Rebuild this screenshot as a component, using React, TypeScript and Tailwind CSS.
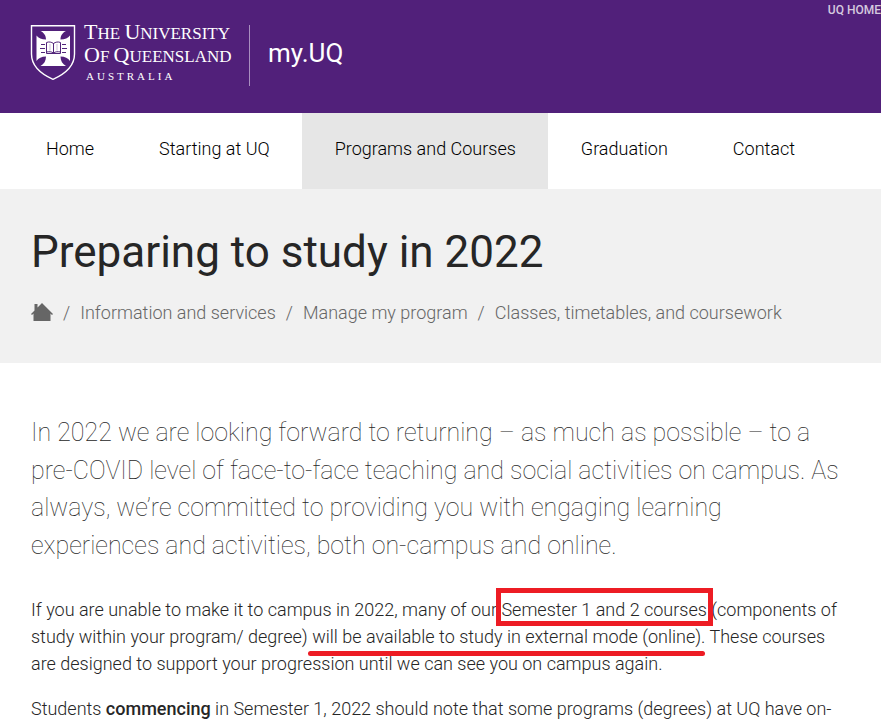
import { clsx } from "clsx";

const navItems = [
  { label: "Home", href: "#home" },
  { label: "Starting at UQ", href: "#starting" },
  { label: "Programs and Courses", href: "#programs", active: true },
  { label: "Graduation", href: "#graduation" },
  { label: "Contact", href: "#contact" },
];

const crumbs = ["Information and services", "Manage my program", "Classes, timetables, and coursework"];

function Crest() {
  return (
    <svg aria-hidden viewBox="0 0 46 56" className="h-14 w-[46px] shrink-0" fill="none">
      <path
        d="M1.5 .8H44.5V29C44.5 41 35 49 23 54.300C11 49 1.500 41 1.500 29Z"
        stroke="white"
        strokeWidth="1.400"
      />
      <path
        d="M10.500 6H36C33 7.500 30.500 10 30.500 14.500C35 14.500 38 13 40 10.500V36C38 33 35 31.500 30.500 31.500C30.500 36 32.500 39 36 41H10.500C14 39 16 36 16 31.500C11.500 31.500 8.500 33 6.500 36V10.500C8.500 13 11.500 14.500 16 14.500C16 10 13.500 7.500 10.500 6Z"
        fill="white"
      />
      <path
        d="M16.500 17.500C19 16.500 21.500 17 23.500 18.500C25.500 17 28 16.500 30.500 17.500V28.500H16.500Z"
        fill="white"
        stroke="#51247a"
      />
      <path d="M23.500 18V28.500M16.500 27C19 26.500 21.500 26.500 23.500 28C25.500 26.500 28 26.500 30.500 27" stroke="#51247a" />
      <path d="M20 19V25.500M27 19V25.500" stroke="#51247a" strokeOpacity=".3" />
      <path d="M11 19.500H15M10 23.500H15M11 27.500H15M32 19.500H36M32 23.500H37M32 27.500H36" stroke="#51247a" />
    </svg>
  );
}

function LogoLine({ words }: { words: string[] }) {
  return (
    <span className="text-[17px] leading-[21px]">
      {words.map((word, i) => (
        <span key={word}>
          {i > 0 && " "}
          <span className="text-[22px]">{word[0]}</span>
          {word.slice(1).toUpperCase()}
        </span>
      ))}
    </span>
  );
}

function Header() {
  return (
    <header className="flex h-[113px] items-start justify-between bg-[#51207a] text-white">
      <div className="flex pl-[30px] pt-[25px]">
        <a href="#uq" className="flex" aria-label="The University of Queensland, Australia">
          <Crest />
          <span className="-mt-1 ml-2 flex w-[148px] flex-col whitespace-nowrap font-['Liberation_Serif',serif] font-normal">
            <LogoLine words={["The", "University"]} />
            <LogoLine words={["Of", "Queensland"]} />
            <span className="pl-0.5 text-[11px] leading-[18px] tracking-[3px]">AUSTRALIA</span>
          </span>
        </a>
        <div className="ml-[17px] h-[61px] w-px bg-[#a98fc0]" />
        <a href="#my" className="ml-[18px] mt-3 text-[26px] font-normal leading-8">
          my.UQ
        </a>
      </div>
      <a href="#uq-home" className="pt-0.5 text-xs font-medium text-[#d5c9df]">
        UQ HOME
      </a>
    </header>
  );
}

export default function App() {
  return (
    <div className="overflow-x-hidden bg-white font-[Roboto,sans-serif] text-lg font-light text-[#262626]">
      <Header />
      <nav className="flex pl-[13px] text-black" aria-label="Main">
        {navItems.map((item) => (
          <a
            key={item.label}
            href={item.href}
            className={clsx("h-[76px] whitespace-nowrap pl-[33px] pr-8 pt-[22px]", item.active && "bg-[#e6e6e6]")}
          >
            {item.label}
          </a>
        ))}
      </nav>

      <section className="bg-[#f1f1f1] px-[31px] pb-9 pt-[33px]">
        <h1 className="text-[44px] font-normal leading-[60px]">Preparing to study in 2022</h1>
        <nav aria-label="Breadcrumb" className="mt-[17px] flex flex-wrap items-center text-[#666]">
          <a href="#home" aria-label="Home" className="pb-0.5">
            <svg aria-hidden viewBox="0 0 22 18" className="h-[18px] w-[22px]" fill="currentColor">
              <path d="M11 0 22 11 21 12 19.500 10.500V18H2.500V10.500L1 12 0 11 3.500 7.500V1H6.500V4.500Z" />
            </svg>
          </a>
          {crumbs.map((crumb) => (
            <span key={crumb} className="flex">
              <span className="px-[10px]">/</span>
              <a href="#crumb">{crumb}</a>
            </span>
          ))}
        </nav>
      </section>

      <main className="px-[31px] pt-[51px]">
        <p className="text-[25px] font-thin leading-normal">
          In 2022 we are looking forward to returning – as much as possible – to a pre-COVID level of
          face-to-face teaching and social activities on campus. As always, we’re committed to
          providing you with engaging learning experiences and activities, both on-campus and online.
        </p>
        <p className="mt-8 leading-[27px]">
          If you are unable to make it to campus in 2022, many of our{" "}
          <span className="relative whitespace-nowrap">
            Semester 1 and 2 courses
            <span aria-hidden className="absolute -left-[5px] -right-1.5 -bottom-1.5 -top-[11px] border-5 border-[#ed1c24]" />
          </span>{" "}
          (components of study within your program/ degree){" "}
          <span className="relative whitespace-nowrap">
            will be available to study in external mode (online).
            <span aria-hidden className="absolute -bottom-[9px] -left-1 right-0 h-[5px] rounded-full bg-[#ed1c24]" />
          </span>{" "}
          These courses are designed to support your progression until we can see you on campus again.
        </p>
        <p className="mt-[18px] leading-[27px]">
          Students <strong className="font-medium">commencing</strong> in Semester 1, 2022 should note
          that some programs (degrees) at UQ have on-
        </p>
      </main>
    </div>
  );
}
